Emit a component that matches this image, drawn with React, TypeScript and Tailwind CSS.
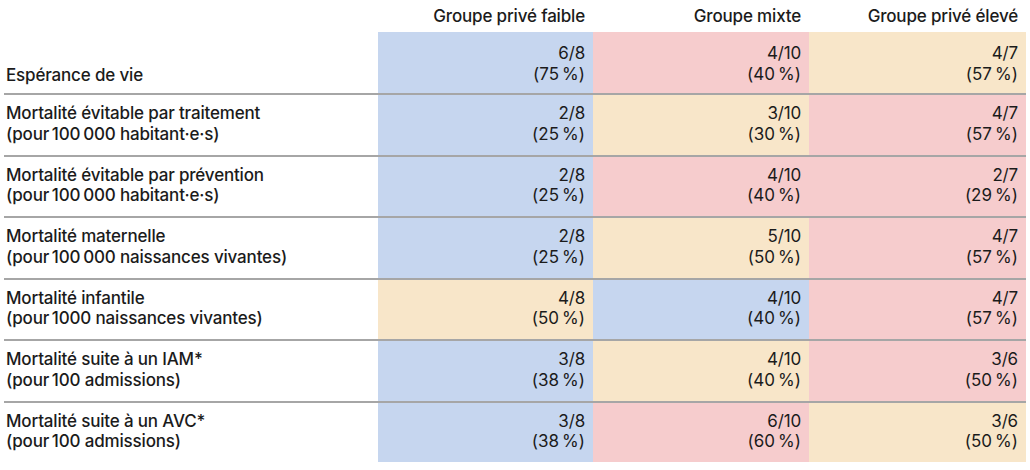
const BLUE = 'bg-[#c6d6ef]';
const PINK = 'bg-[#f6cccd]';
const BEIGE = 'bg-[#f8e6c9]';

// narrow no-break space, used in numbers and before "%"
const N = '\u202F';

type Cell = { v: string; p: string; c: string };
type Row = { label: string; sub?: string; cells: Cell[] };

const rows: Row[] = [
  {
    label: 'Espérance de vie',
    cells: [
      { v: '6/8', p: '75', c: BLUE },
      { v: '4/10', p: '40', c: PINK },
      { v: '4/7', p: '57', c: BEIGE },
    ],
  },
  {
    label: 'Mortalité évitable par traitement',
    sub: `(pour${N}100${N}000 habitant·e·s)`,
    cells: [
      { v: '2/8', p: '25', c: BLUE },
      { v: '3/10', p: '30', c: BEIGE },
      { v: '4/7', p: '57', c: PINK },
    ],
  },
  {
    label: 'Mortalité évitable par prévention',
    sub: `(pour${N}100${N}000 habitant·e·s)`,
    cells: [
      { v: '2/8', p: '25', c: BLUE },
      { v: '4/10', p: '40', c: PINK },
      { v: '2/7', p: '29', c: PINK },
    ],
  },
  {
    label: 'Mortalité maternelle',
    sub: `(pour${N}100${N}000 naissances vivantes)`,
    cells: [
      { v: '2/8', p: '25', c: BLUE },
      { v: '5/10', p: '50', c: BEIGE },
      { v: '4/7', p: '57', c: PINK },
    ],
  },
  {
    label: 'Mortalité infantile',
    sub: `(pour${N}1000 naissances vivantes)`,
    cells: [
      { v: '4/8', p: '50', c: BEIGE },
      { v: '4/10', p: '40', c: BLUE },
      { v: '4/7', p: '57', c: PINK },
    ],
  },
  {
    label: 'Mortalité suite à un IAM*',
    sub: `(pour${N}100 admissions)`,
    cells: [
      { v: '3/8', p: '38', c: BLUE },
      { v: '4/10', p: '40', c: BEIGE },
      { v: '3/6', p: '50', c: PINK },
    ],
  },
  {
    label: 'Mortalité suite à un AVC*',
    sub: `(pour${N}100 admissions)`,
    cells: [
      { v: '3/8', p: '38', c: BLUE },
      { v: '6/10', p: '60', c: PINK },
      { v: '3/6', p: '50', c: BEIGE },
    ],
  },
];

const cols = 'grid grid-cols-[374px_215px_216px_217px]';

export default function App() {
  return (
    <div
      className="w-[1030px] h-[470px] bg-white px-[4px] text-[17px] leading-[20.5px] text-[#1b1b1b] tracking-[-0.01em]"
      style={{ fontFamily: 'Inter, "Liberation Sans", sans-serif' }}
    >
      <div className={`${cols} h-[32px] items-center font-medium`}>
        <div />
        <div className="text-right pr-[8px]">Groupe privé faible</div>
        <div className="text-right pr-[8px]">Groupe mixte</div>
        <div className="text-right pr-[8px]">Groupe privé élevé</div>
      </div>

      {rows.map((row, i) => (
        <div
          key={row.label}
          className={
            i === 0
              ? `${cols} h-[61px]`
              : `${cols} h-[61.5px] border-t-2 border-black/35`
          }
        >
          <div
            className={
              i === 0
                ? 'flex flex-col justify-end pb-[8px] pl-[2px] font-medium'
                : 'pt-[8px] pl-[2px] font-medium'
            }
          >
            <div>{row.label}</div>
            {row.sub && <div>{row.sub}</div>}
          </div>
          {row.cells.map((cell, j) => (
            <div
              key={j}
              className={
                i === 0
                  ? `${cell.c} text-right pr-[8px] pt-[11px]`
                  : `${cell.c} text-right pr-[8px] pt-[8px]`
              }
            >
              <div>{cell.v}</div>
              <div>({cell.p}{N}%)</div>
            </div>
          ))}
        </div>
      ))}
    </div>
  );
}
